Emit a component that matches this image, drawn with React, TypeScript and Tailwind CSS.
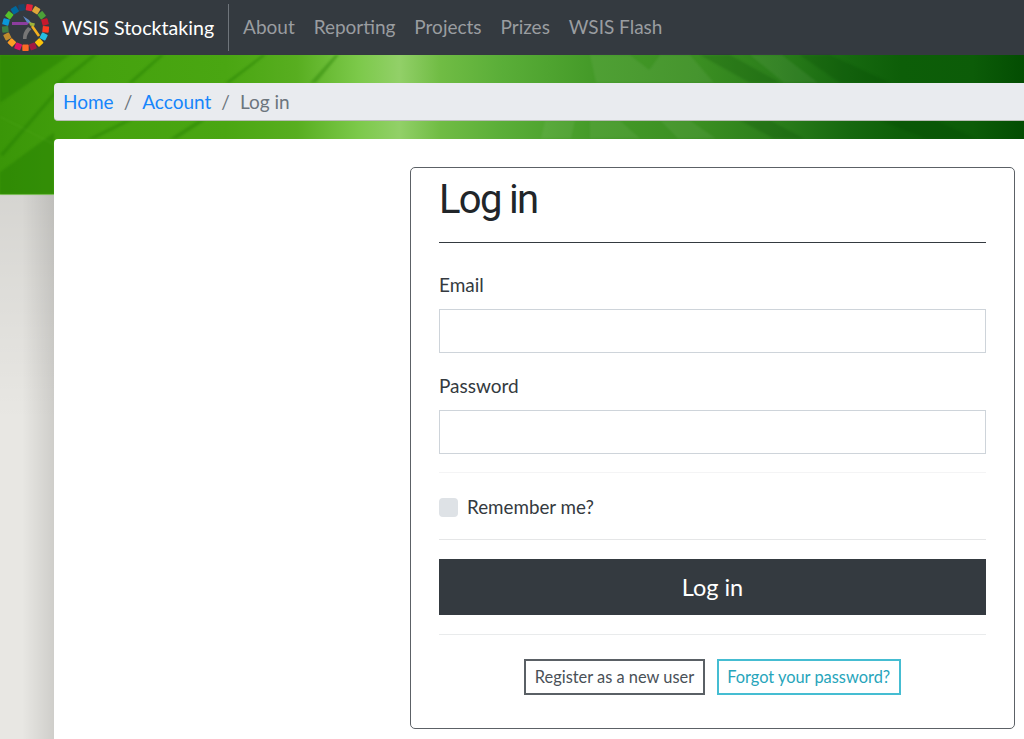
const navLinks = ["About", "Reporting", "Projects", "Prizes", "WSIS Flash"];

const sdgColours = [
  "#e5243b", "#dda63a", "#4c9f38", "#c5192d", "#ff3a21", "#26bde2", "#fcc30b", "#a21942", "#fd6925",
  "#dd1367", "#fd9d24", "#bf8b2e", "#3f7e44", "#0a97d9", "#56c02b", "#00689d", "#19486a",
];

function Logo() {
  return (
    <svg width="52" height="54" viewBox="0 0 52 54" className="shrink-0">
      {sdgColours.map((colour, i) => (
        <rect
          key={colour}
          x="22.3"
          y="3"
          width="6.4"
          height="6.4"
          rx="0.8"
          fill={colour}
          transform={`rotate(${(i + 0.5) * (360 / 17)} 25.5 26.5)`}
        />
      ))}
      <path d="M12 21h15l2 1.5-2 1.5H12z" fill="#8d3d9e" />
      <path d="M23 15l6 4 3 4-5-1.5z" fill="#5f8bc9" />
      <path d="M28 26c-3 3-5 6-5 12h3.5c0-4 2-7 5-10z" fill="#767676" />
      <path d="M32 25l7 10" stroke="#f2b01e" strokeWidth="2.6" />
      <path d="M29 21l6 1.5-1 3-4-1z" fill="#9fb23a" />
    </svg>
  );
}

function Banner() {
  // leaf streaks on the left, woven bands on the right
  return (
    <svg className="absolute inset-0 h-full w-full blur-[1px]" viewBox="0 0 1024 140" preserveAspectRatio="none">
      <g fill="#1f7a00" fillOpacity="0.38">
        <path d="M0 0h70L0 48z" />
        <path d="M0 140V118L54 78v62z" />
        <path d="M0 100L62 28l3 1L3 102z" />
        <path d="M54 30L92 0h5L58 32z" />
        <path d="M128 28L160 0h4L133 28z" />
        <path d="M225 28L262 0h4L230 28z" />
        <path d="M310 28L335 0h4L316 28z" />
        <path d="M88 84L125 66h7L95 84z" />
        <path d="M170 84L198 66h7L177 84z" />
      </g>
      <g stroke="#8ad05a" strokeOpacity="0.15" fill="none">
        <path d="M0 62L54 90" />
      </g>
      <g fill="#ffffff" fillOpacity="0.06">
        <path d="M590 0h40l36 28h-70zM640 28l20-28h30l24 28zM750 0h32l36 28h-34z" />
        <path d="M545 66h30l-4 18h-30zM590 66h30l20 18h-50zM660 66h30l26 18h-38z" />
      </g>
      <g fill="#003c00" fillOpacity="0.18">
        <path d="M700 0l50 28h30L730 0zM800 0h30l60 28h-50zM880 66l46 18h50l-40-18zM740 66h30l34 18h-30z" />
      </g>
    </svg>
  );
}

export default function App() {
  return (
    <div className="h-[739px] w-[1024px] overflow-hidden bg-[linear-gradient(90deg,#00000000_22px,#0000001c_54px),linear-gradient(180deg,#00000014_195px,#00000000_420px),linear-gradient(90deg,#e8e7e3,#e8e7e3)] font-['Lato',sans-serif] text-[#343a40]">
      <nav className="flex h-[55px] items-center bg-[#343a40]">
        <Logo />
        <a className="ml-[10px] text-[19.6px] text-white">WSIS Stocktaking</a>
        <div className="ml-[14px] h-[47px] w-px bg-[#6f757b]" />
        <ul className="ml-[14px] flex gap-[18.9px] text-[19px] text-[#9a9da0]">
          {navLinks.map((link) => (
            <li key={link}>{link}</li>
          ))}
        </ul>
      </nav>

      <div className="relative h-[140px] border-b border-[#86c262] bg-[linear-gradient(90deg,#3a9608_0%,#45a20e_10%,#4aa612_22%,#58ae20_29%,#7cc94a_35%,#92d068_39%,#70bc44_43%,#5aae38_49%,#449a28_58%,#3b8f22_68%,#2a7d1a_76%,#16680f_83%,#0d5e08_88%,#0c5c08_95%,#034d02_100%)]">
        <Banner />
        <div className="relative pl-[54px] pt-[28px]">
          <ol className="flex h-[38px] items-center rounded-l-[4px] border-b border-[#b9bdb6] bg-[#e9ebef] pl-[9px] pt-[2px] text-[19px]">
            <li className="text-[#1685fb]">Home</li>
            <li className="px-[10px] text-[#6c757d]">/</li>
            <li className="text-[#1685fb]">Account</li>
            <li className="px-[10px] text-[#6c757d]">/</li>
            <li className="text-[#6c757d]">Log in</li>
          </ol>
        </div>
      </div>

      <main className="relative -mt-[56px] ml-[54px] h-[700px] rounded-tl-[4px] bg-white pl-[356px] pr-[9px] pt-[28px]">
        <form className="h-[562px] rounded-[5px] border border-[#5c6166] px-[28px]">
          <h1 className="border-b border-[#343a40] pb-[15px] pt-[5px] font-['Roboto',sans-serif] text-[40px] leading-[54px] tracking-[-1.7px] text-[#212529]">
            Log in
          </h1>

          <label className="mt-[28px] block text-[19px] leading-[28px]">Email</label>
          <input className="mt-[10px] block h-[44px] w-full border border-[#ced4da] bg-white" />

          <label className="mt-[19px] block text-[19px] leading-[28px]">Password</label>
          <input className="mt-[10px] block h-[44px] w-full border border-[#ced4da] bg-white" />

          <div className="mt-[18px] flex h-[68px] items-center gap-[9px] border-y border-t-[#f4f4f5] border-b-[#e5e6e7] pt-[2px]">
            <span className="h-[19px] w-[19px] rounded-[4px] bg-[#dee2e6]" />
            <label className="text-[18.8px]">Remember me?</label>
          </div>

          <button
            type="button"
            className="mt-[19px] block h-[56px] w-full bg-[#343a40] pt-[1px] text-[23.5px] text-white"
          >
            Log in
          </button>

          <div className="mt-[19px] flex justify-center gap-[12px] border-t border-[#e9ebec] pt-[24px]">
            <a className="flex h-[36px] items-center border-2 border-[#5a6065] px-[8.5px] pt-[1px] text-[16.4px] text-[#495057]">
              Register as a new user
            </a>
            <a className="flex h-[36px] items-center border-2 border-[#45bdd2] px-[8.5px] pt-[1px] text-[16.4px] text-[#27a5bb]">
              Forgot your password?
            </a>
          </div>
        </form>
      </main>
    </div>
  );
}
